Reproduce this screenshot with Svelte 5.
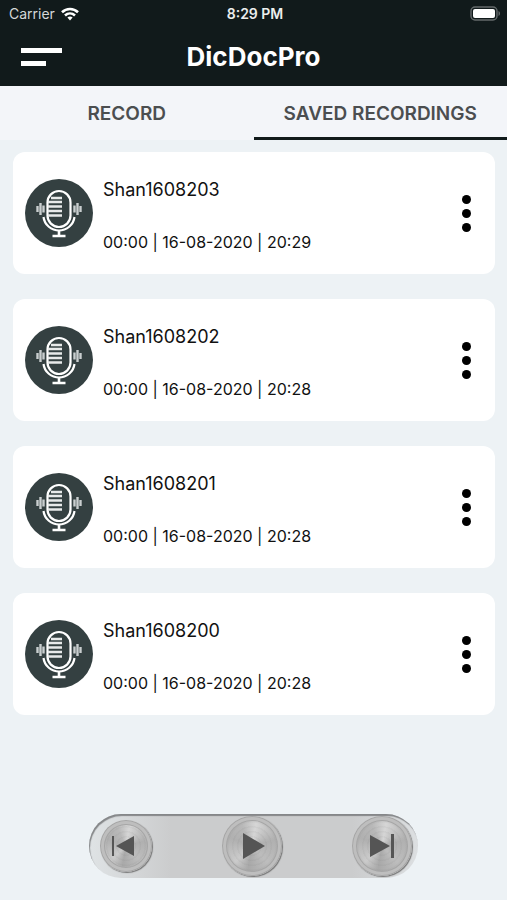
<script>
  const recordings = [
    { name: 'Shan1608203', length: '00:00', date: '16-08-2020', time: '20:29' },
    { name: 'Shan1608202', length: '00:00', date: '16-08-2020', time: '20:28' },
    { name: 'Shan1608201', length: '00:00', date: '16-08-2020', time: '20:28' },
    { name: 'Shan1608200', length: '00:00', date: '16-08-2020', time: '20:28' }
  ];

  let tab = $state('saved');
</script>

<div class="app">
  <header>
    <div class="status">
      <div class="carrier">
        <span>Carrier</span>
        <svg width="18" height="14" viewBox="0 0 18 14" fill="none" stroke="#fff" stroke-width="2.6" aria-hidden="true">
          <path d="M1 5.2C5.5.9 12.5.9 17 5.2" />
          <path d="M4 8.5c2.9-2.7 7.1-2.7 10 0" />
          <path d="M6.4 10.6c1.5-1.4 3.7-1.4 5.2 0L9 13.6z" fill="#fff" stroke="none" />
        </svg>
      </div>
      <span class="clock">8:29 PM</span>
      <svg class="battery" width="31" height="15" viewBox="0 0 31 15" aria-hidden="true">
        <rect x="1" y="1" width="26" height="13" rx="4" fill="#111a1b" stroke="#646a6b" stroke-width="1.4" />
        <rect x="3" y="3" width="22" height="9" rx="2" fill="#fff" />
        <path d="M28.5 5c2 .8 2 4.2 0 5z" fill="#646a6b" />
      </svg>
    </div>
    <div class="nav">
      <button class="menu" aria-label="Menu"><i></i><i class="short"></i></button>
      <h1>DicDocPro</h1>
    </div>
  </header>

  <nav class="tabs">
    <button class:on={tab === 'record'} onclick={() => (tab = 'record')}>RECORD</button>
    <button class:on={tab === 'saved'} onclick={() => (tab = 'saved')}>SAVED RECORDINGS</button>
  </nav>

  <main>
    {#each recordings as r}
      <article class="card">
        <svg class="mic" viewBox="0 0 68 68" fill="none" stroke="#fff" aria-hidden="true">
          <circle cx="34" cy="34" r="34" fill="#344041" stroke="none" />
          <rect x="22.5" y="12" width="23" height="36" rx="11.5" stroke-width="2.2" />
          <path d="M26 19h11M23 23h14M23 27.500h14M23 32h14M23 36.500h14" stroke-width="2.4" stroke="#e8eaea" />
          <path d="M18.500 38c1 8 8 13.500 15.500 13.500S48.500 46 49.500 38" stroke-width="2.2" />
          <path d="M34 52v4.500M27.500 57h13" stroke-width="2.6" />
          <path d="M12.500 27v6M15.500 24v12M18.500 26.500v7M49.500 26.500v7M52.500 24v12M55.500 27v6" stroke-width="2.4" stroke="#c9cecf" />
        </svg>
        <div class="info">
          <h2>{r.name}</h2>
          <p>{r.length} | {r.date} | {r.time}</p>
        </div>
        <button class="more" aria-label="Options for {r.name}"><i></i><i></i><i></i></button>
      </article>
    {/each}
  </main>

  <footer>
    <div class="player">
      <button class="knob prev" aria-label="Previous">
        <svg width="24" height="24" viewBox="0 0 24 24" fill="#555" aria-hidden="true">
          <path d="M1 2h2v20H1zM23 2v20L5 12z" />
        </svg>
      </button>
      <button class="knob play" aria-label="Play">
        <svg width="24" height="26" viewBox="0 0 24 26" fill="#555" aria-hidden="true">
          <path d="M1 0v26l22-13z" />
        </svg>
      </button>
      <button class="knob next" aria-label="Next">
        <svg width="26" height="24" viewBox="0 0 26 24" fill="#555" aria-hidden="true">
          <path d="M1 1v22l20-11zM22 0h3v24h-3z" />
        </svg>
      </button>
    </div>
  </footer>
</div>

<style>
  :global(body){margin:0}
  .app{min-height:100vh;display:flex;flex-direction:column;background:#edf2f5;color:#111;
    font-family:Inter,"Liberation Sans",sans-serif}
  button{border:0;padding:0;background:none;font:inherit;color:inherit;cursor:pointer}
  h1,h2,p{margin:0}

  header{background:#111a1b;color:#fff}
  .status{display:grid;grid-template-columns:1fr auto 1fr;align-items:center;height:27px;padding:0 6px 0 9px;font-size:14px}
  .carrier{display:flex;align-items:center;gap:6px;color:#d5d8d8}
  .clock{font-weight:600;color:#eceeee}
  .battery{justify-self:end}
  .nav{display:grid;grid-template-columns:1fr auto 1fr;align-items:center;height:59px;padding:0 21px}
  .menu{display:flex;flex-direction:column;gap:8px;width:41px}
  .menu i{height:5px;background:#fff}
  .menu .short{width:25px}
  h1{font-size:26px;font-weight:700;line-height:30px}

  .tabs{display:flex;height:54px;background:#f3f5f9}
  .tabs button{flex:1;padding-top:4px;border-bottom:3px solid transparent;font-size:19px;font-weight:600;color:#4b4e50;white-space:nowrap}
  .tabs .on{border-color:#111a1b}

  main{display:flex;flex-direction:column;gap:25px;padding:12px 12px 24px 13px}
  .card{display:flex;align-items:center;height:122px;padding:0 20px 0 12px;border-radius:12px;background:#fff}
  .mic{width:68px;height:68px;flex:none}
  .info{flex:1;display:flex;flex-direction:column;gap:30px;padding:6px 0 0 10px}
  h2{font-size:18px;font-weight:400;line-height:22px}
  p{font-size:16px;line-height:22px}
  .more{display:flex;flex-direction:column;align-items:center;gap:5px;width:18px}
  .more i{width:9px;height:9px;border-radius:50%;background:#000}

  footer{display:flex;justify-content:center;margin-top:auto;padding-bottom:22px}
  .player{display:flex;align-items:center;justify-content:space-between;box-sizing:border-box;width:65%;height:64px;padding:0 6px 0 11px;
    border-radius:32px;background:linear-gradient(90deg,#dfe3e5,#cbcccd 25%,#cbcccd 80%,#dcdfe1);
    box-shadow:inset 1px 2px 1px #858789}
  .knob{display:flex;align-items:center;justify-content:center;border-radius:50%;
    background:
      repeating-radial-gradient(circle,transparent 0 3px,rgba(100,100,100,.06) 4px 5px),
      conic-gradient(from 10deg,#d6d6d6,#b0b0b0 18%,#bdbdbd 35%,#a9a9a9 50%,#cbcbcb 60%,#b0b0b0 78%,#b8b8b8 90%,#d6d6d6);
    box-shadow:inset 0 0 0 1px #a6a6a6,inset 0 0 0 4px #bebebe,inset 0 0 0 5px #a6a6a6,1px 1px 1px #777}
  .prev{width:52px;height:52px}
  .prev svg{margin-right:6px}
  .play{width:60px;height:60px}
  .play svg{margin-left:4px}
  .next{width:60px;height:60px}
</style>
